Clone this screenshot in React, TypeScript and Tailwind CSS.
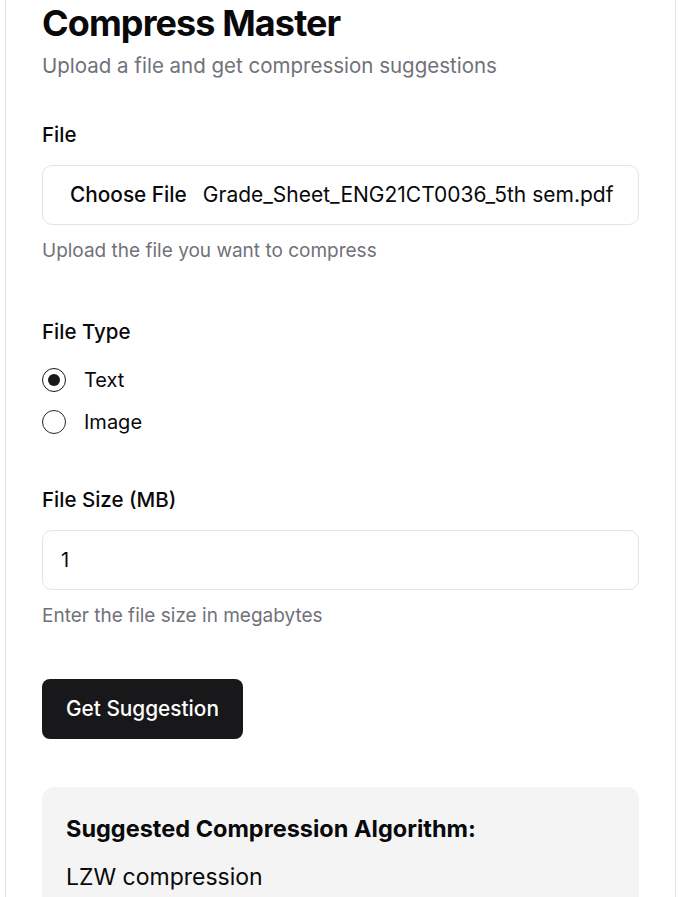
import React from "react";

const font = { fontFamily: "Inter, 'Noto Sans', sans-serif" };

function Radio({ checked, label }: { checked: boolean; label: string }) {
  return (
    <div className="flex items-center gap-[18px] h-[24px]">
      <span
        className={
          "flex h-[24px] w-[24px] items-center justify-center rounded-full border-[1.5px] " +
          (checked ? "border-[#18181b]" : "border-[#27272a]")
        }
      >
        {checked && <span className="h-[12px] w-[12px] rounded-full bg-[#18181b]" />}
      </span>
      <span className="text-[20px] text-[#09090b]">{label}</span>
    </div>
  );
}

export default function App() {
  return (
    <div className="min-h-screen bg-white" style={font}>
      <div className="ml-[5px] w-[671px] -mt-[34px] rounded-xl border border-[#e4e4e7] bg-white p-9 pb-10">
        <h1 className="text-[36px] leading-[40px] font-bold tracking-tight text-[#09090b]">Compress Master</h1>
        <p className="mt-[9px] text-[20.5px] leading-[28px] text-[#71717a]">
          Upload a file and get compression suggestions
        </p>

        <div className="mt-[41px] flex flex-col">
          <label className="text-[20.5px] leading-[28px] font-medium text-[#09090b]">File</label>
          <div className="mt-[16px] flex h-[60px] items-center overflow-hidden whitespace-nowrap rounded-[10px] border border-[#e4e4e7] pl-[27px] pr-[10px] text-[21px] text-[#09090b]">
            <span className="font-medium text-[20.8px]">Choose File</span>
            <span className="ml-[16px]">Grade_Sheet_ENG21CT0036_5th sem.pdf</span>
          </div>
          <p className="mt-[12px] text-[19px] leading-[28px] text-[#71717a]">Upload the file you want to compress</p>
        </div>

        <div className="mt-[53px] flex flex-col">
          <label className="text-[20.5px] leading-[28px] font-medium text-[#09090b]">File Type</label>
          <div className="mt-[22px] flex flex-col gap-[18px]">
            <Radio checked label="Text" />
            <Radio checked={false} label="Image" />
          </div>
        </div>

        <div className="mt-[52px] flex flex-col">
          <label className="text-[20.5px] leading-[28px] font-medium text-[#09090b]">File Size (MB)</label>
          <div className="mt-[16px] flex h-[60px] items-center rounded-[10px] border border-[#e4e4e7] px-[18px] text-[20px] text-[#09090b]">
            1
          </div>
          <p className="mt-[12px] text-[19px] leading-[28px] text-[#71717a]">Enter the file size in megabytes</p>
        </div>

        <button className="mt-[49px] flex h-[60px] items-center rounded-[8px] bg-[#18181b] px-[24px] text-[20.8px] font-medium text-white">
          Get Suggestion
        </button>

        <div className="mt-[48px] rounded-[12px] bg-[#f4f4f5] px-[24px] pt-[26px] pb-[24px]">
          <h2 className="text-[23.5px] leading-[32px] font-bold text-[#09090b]">Suggested Compression Algorithm:</h2>
          <p className="mt-[16px] text-[23px] leading-[32px] text-[#09090b]">LZW compression</p>
        </div>
      </div>
    </div>
  );
}
